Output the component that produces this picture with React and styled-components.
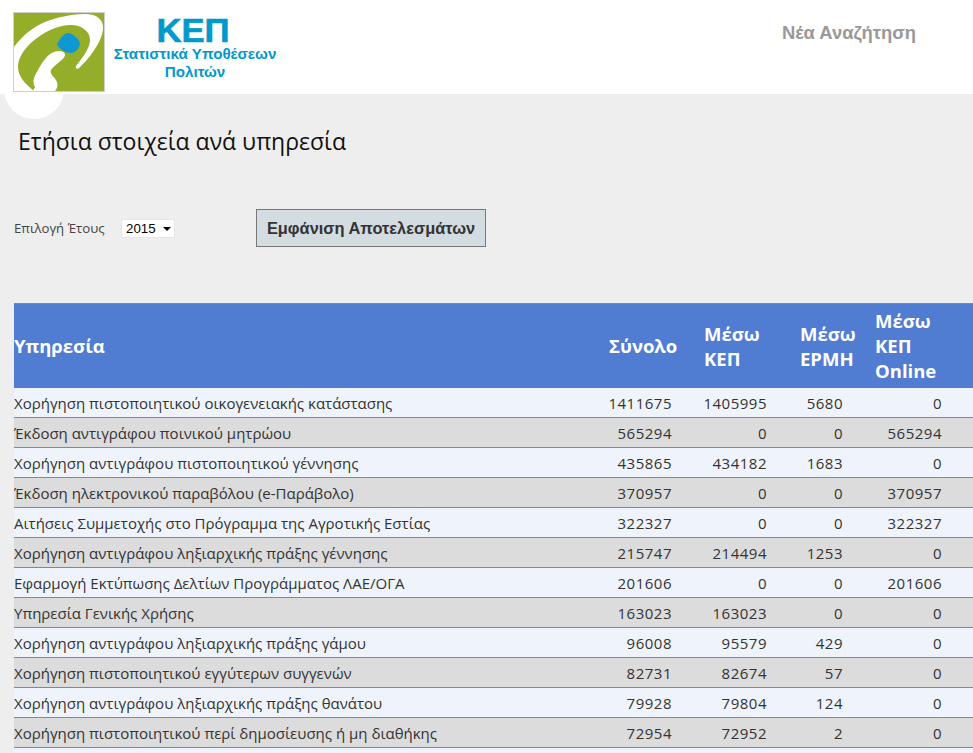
import React from "react";
import styled, { createGlobalStyle } from "styled-components";

const GlobalStyle = createGlobalStyle`
  html, body {
    margin: 0;
    padding: 0;
    height: 753px;
    overflow: hidden;
    background: #eeeeee;
    font-family: "Open Sans", "Liberation Sans", sans-serif;
  }
`;

const rows = [
  ["Χορήγηση πιστοποιητικού οικογενειακής κατάστασης", 1411675, 1405995, 5680, 0],
  ["Έκδοση αντιγράφου ποινικού μητρώου", 565294, 0, 0, 565294],
  ["Χορήγηση αντιγράφου πιστοποιητικού γέννησης", 435865, 434182, 1683, 0],
  ["Έκδοση ηλεκτρονικού παραβόλου (e-Παράβολο)", 370957, 0, 0, 370957],
  ["Αιτήσεις Συμμετοχής στο Πρόγραμμα της Αγροτικής Εστίας", 322327, 0, 0, 322327],
  ["Χορήγηση αντιγράφου ληξιαρχικής πράξης γέννησης", 215747, 214494, 1253, 0],
  ["Εφαρμογή Εκτύπωσης Δελτίων Προγράμματος ΛΑΕ/ΟΓΑ", 201606, 0, 0, 201606],
  ["Υπηρεσία Γενικής Χρήσης", 163023, 163023, 0, 0],
  ["Χορήγηση αντιγράφου ληξιαρχικής πράξης γάμου", 96008, 95579, 429, 0],
  ["Χορήγηση πιστοποιητικού εγγύτερων συγγενών", 82731, 82674, 57, 0],
  ["Χορήγηση αντιγράφου ληξιαρχικής πράξης θανάτου", 79928, 79804, 124, 0],
  ["Χορήγηση πιστοποιητικού περί δημοσίευσης ή μη διαθήκης", 72954, 72952, 2, 0],
];

const Header = styled.header`
  position: relative;
  height: 94px;
  background: #ffffff;
  display: flex;
  align-items: flex-start;
  padding: 12px 57px 0 13px;
  box-sizing: border-box;

  &::after {
    content: "";
    position: absolute;
    left: 4px;
    top: 59px;
    width: 60px;
    height: 60px;
    border-radius: 50%;
    background: #ffffff;
  }
`;

const Logo = styled.svg`
  width: 92px;
  height: 80px;
  flex: none;
  position: relative;
  z-index: 1;
`;

const Brand = styled.div`
  width: 164px;
  margin-left: 8px;
  color: #0099cc;
  text-align: center;
  font-family: "Liberation Sans", Arial, sans-serif;
  font-weight: 700;
  font-size: 15.2px;
  line-height: 18px;
`;

const BrandName = styled.div`
  font-size: 33px;
  line-height: 24px;
  margin: 7px 4px 2px 0;
  transform: scaleX(1.05);
  -webkit-text-stroke: 0.6px #0099cc;
`;

const NewSearch = styled.a`
  margin-left: auto;
  margin-top: 10px;
  color: #999999;
  font-family: "Liberation Sans", Arial, sans-serif;
  font-weight: 700;
  font-size: 18.4px;
  line-height: 22px;
`;

const Main = styled.main`
  padding: 0 0 0 14px;
`;

const Title = styled.h1`
  margin: 0 0 0 4px;
  padding-top: 31px;
  font-size: 23px;
  line-height: 32px;
  font-weight: 400;
  color: #111111;
`;

const FilterBar = styled.div`
  display: flex;
  align-items: center;
  margin-top: 52px;
  height: 38px;
`;

const FilterLabel = styled.label`
  font-size: 13.2px;
  color: #444444;
  width: 107px;
`;

const YearSelect = styled.div`
  position: relative;
  width: 54px;
  height: 19px;
  box-sizing: border-box;
  background: #ffffff;
  border: 1px solid #e4e4e4;
  border-radius: 2px;
  padding-left: 4px;
  font-family: "Liberation Sans", Arial, sans-serif;
  font-size: 13.3px;
  line-height: 17px;
  color: #000000;

  &::after {
    content: "";
    position: absolute;
    right: 3px;
    top: 7px;
    border-left: 4px solid transparent;
    border-right: 4px solid transparent;
    border-top: 4px solid #000000;
  }
`;

const ShowButton = styled.button`
  margin-left: 81px;
  width: 230px;
  height: 38px;
  padding: 0;
  background: #d3dce1;
  border: 1px solid #777777;
  color: #333333;
  font-family: "Liberation Sans", Arial, sans-serif;
  font-weight: 700;
  font-size: 16.4px;
`;

const Table = styled.table`
  margin-top: 56px;
  width: 959px;
  table-layout: fixed;
  border-collapse: collapse;
  border-top: 1px solid #888888;
`;

const HeadRow = styled.tr`
  height: 84px;
  background: #507cd1;
`;

const HeadCell = styled.th`
  padding: 0 0 0 ${(p) => p.$indent || 0}px;
  text-align: left;
  color: #ffffff;
  font-size: 18.5px;
  line-height: 25px;
  font-weight: 700;
`;

const Row = styled.tr`
  height: 30px;
  background: ${(p) => (p.$odd ? "#dcdcdc" : "#eff3fb")};
  border-bottom: 1px solid #888888;
`;

const Cell = styled.td`
  box-sizing: border-box;
  padding: 1px 10px 0 0;
  text-align: ${(p) => (p.$num ? "right" : "left")};
  font-size: 15px;
  line-height: 20px;
  color: #333333;
  white-space: nowrap;
  letter-spacing: ${(p) => (p.$num ? "0.5px" : "0")};
`;

const LogoMark = () => (
  <Logo viewBox="0 0 92 80">
    <rect x="0.5" y="0.5" width="91" height="79" fill="#95ae2a" stroke="#d0d0d0" />
    <path
      d="M1 35 C9 24 20 15 32 10 C44 5 60 2 72 2 C84 2 91 8 90 17 C89 30 76 47 66 56 C64 58 62 56 63 54 C70 45 77 36 77 28 C77 19 68 13 58 13 C45 13 30 20 19 30 C10 38 5 47 5 55 C5 64 12 72 21 79 L1 79 Z"
      fill="#ffffff"
    />
    <path
      d="M22 75 C18 68 23 62 26 56 C30 49 35 42 41 40 C46 38 52 39 52 43 C52 47 42 52 38 58 C36 62 42 65 44 70 C45 74 44 77 42 79 L20 79 Z"
      fill="#ffffff"
    />
    <path
      d="M44 32 C46 28 51 21 55 21 C59 21 66 27 67 31 C67 36 62 41 58 41 C53 41 44 36 44 32 Z"
      fill="#0f97d2"
    />
  </Logo>
);

const App = () => (
  <>
    <GlobalStyle />
    <Header>
      <LogoMark />
      <Brand>
        <BrandName>ΚΕΠ</BrandName>
        <div>Στατιστικά Υποθέσεων</div>
        <div>Πολιτών</div>
      </Brand>
      <NewSearch>Νέα Αναζήτηση</NewSearch>
    </Header>
    <Main>
      <Title>Ετήσια στοιχεία ανά υπηρεσία</Title>
      <FilterBar>
        <FilterLabel>Επιλογή Έτους</FilterLabel>
        <YearSelect>2015</YearSelect>
        <ShowButton>Εμφάνιση Αποτελεσμάτων</ShowButton>
      </FilterBar>
      <Table>
        <colgroup>
          <col style={{ width: 585 }} />
          <col style={{ width: 83 }} />
          <col style={{ width: 95 }} />
          <col style={{ width: 76 }} />
          <col style={{ width: 99 }} />
          <col />
        </colgroup>
        <thead>
          <HeadRow>
            <HeadCell>Υπηρεσία</HeadCell>
            <HeadCell $indent={10}>Σύνολο</HeadCell>
            <HeadCell $indent={22}>Μέσω<br />ΚΕΠ</HeadCell>
            <HeadCell $indent={23}>Μέσω<br />ΕΡΜΗ</HeadCell>
            <HeadCell $indent={22}>Μέσω<br />ΚΕΠ<br />Online</HeadCell>
            <HeadCell />
          </HeadRow>
        </thead>
        <tbody>
          {rows.map((r, i) => (
            <Row key={r[0]} $odd={i % 2 === 1}>
              <Cell>{r[0]}</Cell>
              {r.slice(1).map((v, j) => (
                <Cell key={j} $num>{v}</Cell>
              ))}
              <Cell />
            </Row>
          ))}
          <Row>
            <Cell colSpan={6} />
          </Row>
        </tbody>
      </Table>
    </Main>
  </>
);

export default App;
